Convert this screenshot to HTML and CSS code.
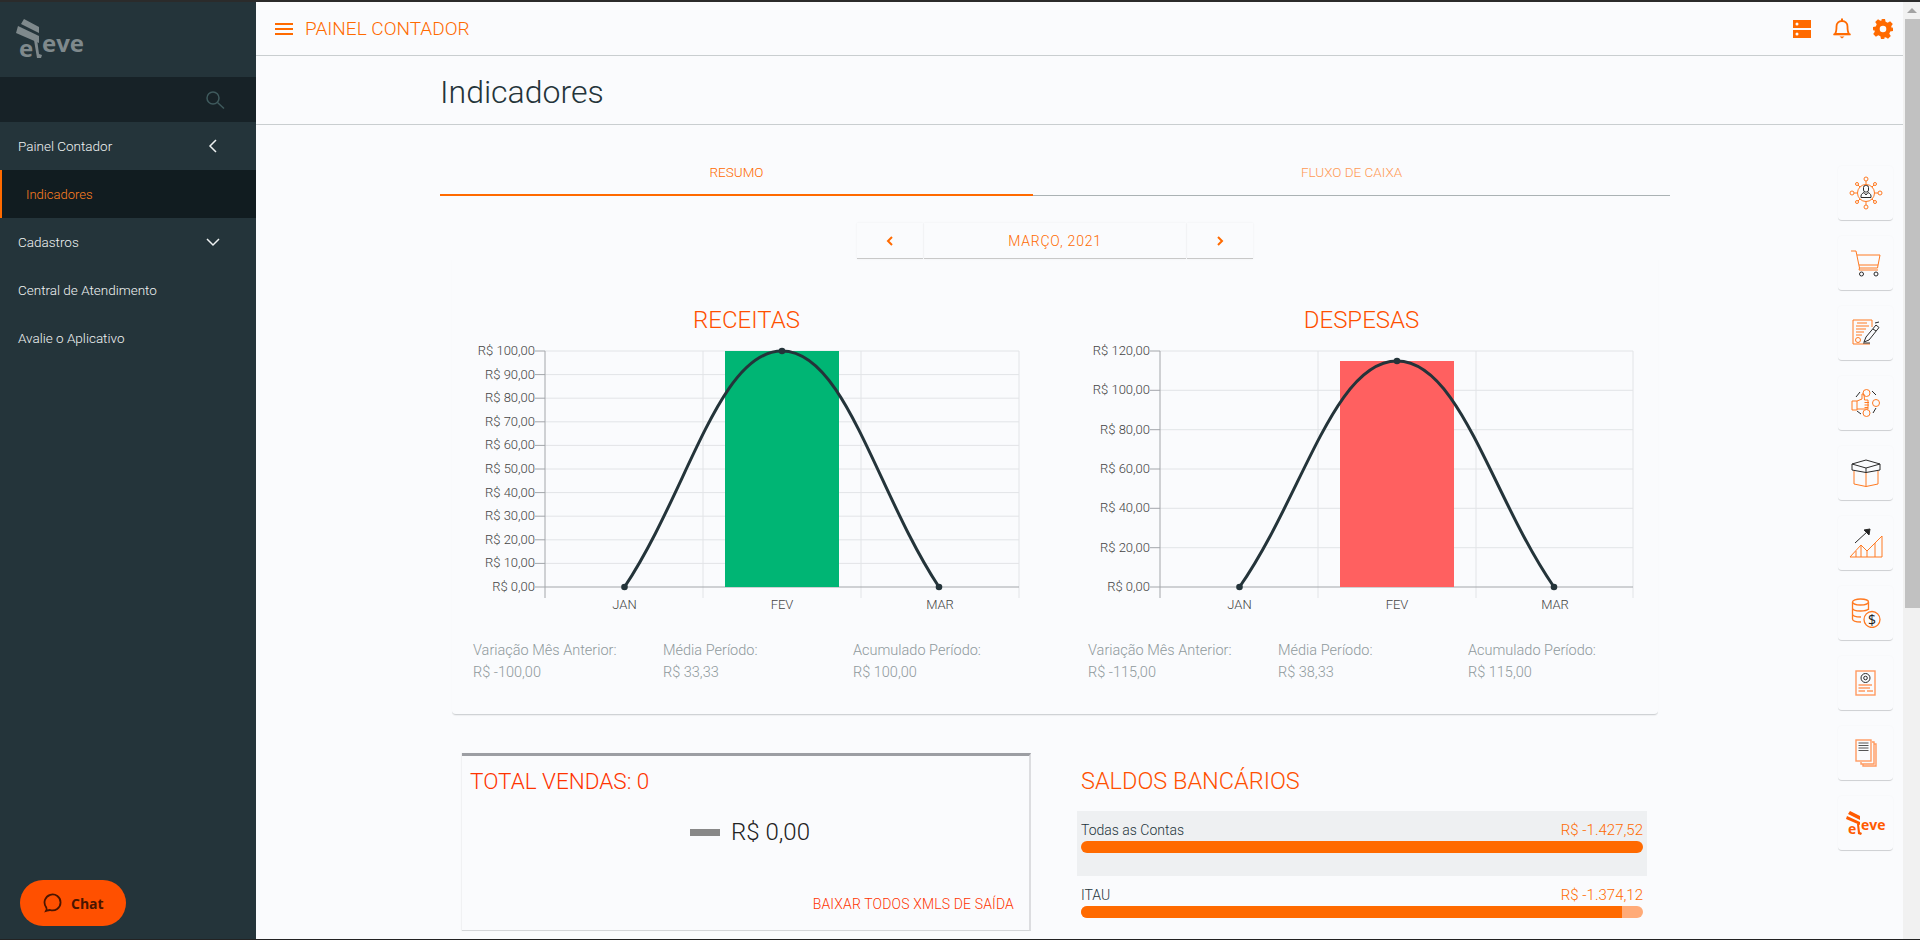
FILE: index.html
```html
<!DOCTYPE html>
<html lang="pt-BR">
<head>
<meta charset="utf-8">
<title>Indicadores</title>
<link rel="stylesheet" href="styles.css">
</head>
<body>
<div class="app">
  <aside class="sidebar">
    <div class="logo">
      <svg width="90" height="50" viewBox="0 0 90 50">
        <g class="logo-gray">
          <polygon points="24,1 39,9 39,15 21,6"/>
          <polygon points="18,8 39,18 39,25 16,15"/>
        </g>
        <text class="logo-text logo-gray" x="19" y="39">e</text>
        <text class="logo-text logo-gray" x="42" y="34">eve</text>
        <polygon class="logo-gray" points="34,22 37,21 39,36 42,37 41,40 37,40"/>
      </svg>
    </div>
    <div class="search">
      <svg width="20" height="20" viewBox="0 0 20 20"><circle class="search-ic" cx="8" cy="8" r="6"/><path class="search-ic" d="M12.5 12.5 L19 18.5"/></svg>
    </div>
    <nav class="menu">
      <div class="menu-item"><span>Painel Contador</span><svg class="chev" width="12" height="14" viewBox="0 0 12 14"><path class="chev-line" d="M8 1 L2 7 L8 13"/></svg></div>
      <div class="menu-item active"><span>Indicadores</span></div>
      <div class="menu-item"><span>Cadastros</span><svg class="chev" width="14" height="10" viewBox="0 0 14 10"><path class="chev-line" d="M1 2 L7 8 L13 2"/></svg></div>
      <div class="menu-item"><span>Central de Atendimento</span></div>
      <div class="menu-item"><span>Avalie o Aplicativo</span></div>
    </nav>
    <button class="chat">
      <svg width="20" height="20" viewBox="0 0 20 20"><path class="chat-ic" d="M4 18 C5 16 5 16 4 14 A8 8 0 1 1 8 17 C6.500 17 5.500 17.500 4 18 Z"/></svg>
      <span>Chat</span>
    </button>
  </aside>

  <main class="main">
    <header class="topbar">
      <div class="burger"><i></i><i></i><i></i></div>
      <div class="topbar-title">PAINEL CONTADOR</div>
      <div class="top-icons">
        <svg width="18" height="18" viewBox="0 0 18 18"><path class="fill-o" d="M0 0H18V8H0Z M4 2.500A1.500 1.500 0 1 0 4 5.500A1.500 1.500 0 1 0 4 2.500Z M0 10H18V18H0Z M4 12.500A1.500 1.500 0 1 0 4 15.500A1.500 1.500 0 1 0 4 12.500Z" fill-rule="evenodd"/></svg>
        <svg width="18" height="21" viewBox="0 0 18 21"><path class="line-bell" d="M2 16 C3.500 14 3.500 12 3.500 8.500 C3.500 5 6 3 9 3 C12 3 14.500 5 14.500 8.500 C14.500 12 14.500 14 16 16 Z"/><rect class="fill-o" x="0.500" y="15.500" width="17" height="1.800"/><rect class="fill-o" x="8" y="0.500" width="2" height="3"/><path class="fill-o" d="M6.500 18.500H11.500L9 20.500Z"/></svg>
        <svg width="20" height="20" viewBox="0 0 20 20"><path class="fill-o" fill-rule="evenodd" d="M8 0H12L12.600 2.800L14.700 3.700L17.100 2.200L19.800 5L18.200 7.300L19 9.400L20 8V12L17.200 12.600L16.300 14.700L17.800 17.100L15 19.800L12.700 18.200L10.600 19L12 20H8L7.400 17.200L5.300 16.300L2.900 17.800L0.200 15L1.800 12.700L1 10.600L0 12V8L2.800 7.400L3.700 5.300L2.200 2.900L5 0.200L7.300 1.800L9.400 1Z M10 6.700A3.300 3.300 0 1 0 10 13.300A3.300 3.300 0 1 0 10 6.700Z"/></svg>
      </div>
    </header>
    <div class="page-title"><h1>Indicadores</h1></div>

    <section class="content">
      <div class="tabs">
        <div class="tab tab-on">RESUMO</div>
        <div class="tab">FLUXO DE CAIXA</div>
      </div>
      <div class="pager">
        <div class="pg pg-btn"><svg width="8" height="10" viewBox="0 0 8 10"><path class="pg-ic" d="M6 1 L2 5 L6 9"/></svg></div>
        <div class="pg pg-mid">MARÇO, 2021</div>
        <div class="pg pg-btn"><svg width="8" height="10" viewBox="0 0 8 10"><path class="pg-ic" d="M2 1 L6 5 L2 9"/></svg></div>
      </div>

      <div class="panel">
        <div class="chart-col">
          <h2 class="chart-title">RECEITAS</h2>
          <svg class="chart" width="589" height="270" viewBox="0 0 589 270">
            <g class="grid">
              <path d="M93 10H567M93 33.600H567M93 57.200H567M93 80.800H567M93 104.400H567M93 128H567M93 151.600H567M93 175.200H567M93 198.800H567M93 222.400H567"/>
              <path d="M251 10V257M409 10V257M567 10V257"/>
            </g>
            <path class="axis" d="M83 10H93M83 33.600H93M83 57.200H93M83 80.800H93M83 104.400H93M83 128H93M83 151.600H93M83 175.200H93M83 198.800H93M83 222.400H93"/>
            <path class="axis" d="M93 10V257M83 246H567"/>
            <rect class="bar-green" x="273" y="10" width="114" height="236"/>
            <path class="curve" d="M172.500 246C235.500 151.600 267 10 330 10C393 10 424.500 151.600 487 246"/>
            <circle class="dot" cx="172.500" cy="246" r="3.300"/><circle class="dot" cx="330" cy="10" r="3.300"/><circle class="dot" cx="487" cy="246" r="3.300"/>
            <g class="tick ty">
              <text x="83" y="14">R$ 100,00</text><text x="83" y="38">R$ 90,00</text><text x="83" y="61">R$ 80,00</text><text x="83" y="85">R$ 70,00</text><text x="83" y="108">R$ 60,00</text><text x="83" y="132">R$ 50,00</text><text x="83" y="156">R$ 40,00</text><text x="83" y="179">R$ 30,00</text><text x="83" y="203">R$ 20,00</text><text x="83" y="226">R$ 10,00</text><text x="83" y="250">R$ 0,00</text>
            </g>
            <g class="tick tx"><text x="172.500" y="268">JAN</text><text x="330" y="268">FEV</text><text x="488" y="268">MAR</text></g>
          </svg>
          <div class="stats">
            <div><p>Variação Mês Anterior:</p><p>R$ -100,00</p></div>
            <div><p>Média Período:</p><p>R$ 33,33</p></div>
            <div><p>Acumulado Período:</p><p>R$ 100,00</p></div>
          </div>
        </div>
        <div class="chart-col">
          <h2 class="chart-title">DESPESAS</h2>
          <svg class="chart" width="589" height="270" viewBox="0 0 589 270">
            <g class="grid">
              <path d="M93 10H566M93 49.300H566M93 88.700H566M93 128H566M93 167.300H566M93 206.700H566"/>
              <path d="M251 10V257M409 10V257M566 10V257"/>
            </g>
            <path class="axis" d="M83 10H93M83 49.300H93M83 88.700H93M83 128H93M83 167.300H93M83 206.700H93"/>
            <path class="axis" d="M93 10V257M83 246H566"/>
            <rect class="bar-red" x="273" y="20" width="114" height="226"/>
            <path class="curve" d="M172.500 246C235.500 155.600 267 20 330 20C393 20 424.500 155.600 487 246"/>
            <circle class="dot" cx="172.500" cy="246" r="3.300"/><circle class="dot" cx="330" cy="20" r="3.300"/><circle class="dot" cx="487" cy="246" r="3.300"/>
            <g class="tick ty">
              <text x="83" y="14">R$ 120,00</text><text x="83" y="53">R$ 100,00</text><text x="83" y="93">R$ 80,00</text><text x="83" y="132">R$ 60,00</text><text x="83" y="171">R$ 40,00</text><text x="83" y="211">R$ 20,00</text><text x="83" y="250">R$ 0,00</text>
            </g>
            <g class="tick tx"><text x="172.500" y="268">JAN</text><text x="330" y="268">FEV</text><text x="488" y="268">MAR</text></g>
          </svg>
          <div class="stats">
            <div><p>Variação Mês Anterior:</p><p>R$ -115,00</p></div>
            <div><p>Média Período:</p><p>R$ 38,33</p></div>
            <div><p>Acumulado Período:</p><p>R$ 115,00</p></div>
          </div>
        </div>
      </div>

      <div class="lower">
        <div class="sales">
          <h3 class="sales-title">TOTAL VENDAS: 0</h3>
          <div class="sales-value"><i></i><span>R$ 0,00</span></div>
          <div class="sales-link">BAIXAR TODOS XMLS DE SAÍDA</div>
        </div>
        <div class="banks">
          <h3 class="banks-title">SALDOS BANCÁRIOS</h3>
          <div class="bank bank-all">
            <div class="bank-row"><span>Todas as Contas</span><b>R$ -1.427,52</b></div>
            <div class="track"><div class="fill fill-all"></div></div>
          </div>
          <div class="bank">
            <div class="bank-row"><span>ITAU</span><b>R$ -1.374,12</b></div>
            <div class="track"><div class="fill fill-itau"></div></div>
          </div>
        </div>
      </div>
    </section>

    <div class="shortcuts">
      <div class="sc"><svg width="34" height="34" viewBox="0 0 34 34">
        <g class="ico-o"><circle cx="17" cy="17" r="8.500"/><circle cx="17" cy="3" r="2"/><circle cx="17" cy="31" r="2"/><circle cx="3" cy="17" r="2"/><circle cx="31" cy="17" r="2"/><circle cx="8" cy="8" r="1.500"/><circle cx="26" cy="8" r="1.500"/><circle cx="8" cy="26" r="1.500"/><circle cx="26" cy="26" r="1.500"/><path d="M17 5V8.500M17 25.500V29M5 17H8.500M25.500 17H29M9 9L11 11M25 9L23 11M9 25L11 23M25 25L23 23"/></g>
        <g class="ico-d"><rect x="14.500" y="9.500" width="5" height="6.500" rx="2"/><path d="M12 21.500V20C12 18 14 17 15 16.500L17 19L19 16.500C20 17 22 18 22 20V21.500Z"/></g>
      </svg></div>
      <div class="sc"><svg width="32" height="28" viewBox="0 0 32 28">
        <g class="ico-o"><path d="M1 2H6L9.500 19H27.500L30 6H7"/><path d="M9 16H28M9.500 19L9 21H28"/></g>
        <g class="ico-d"><circle cx="11.500" cy="25" r="2"/><circle cx="26" cy="25" r="2"/></g>
      </svg></div>
      <div class="sc"><svg width="30" height="28" viewBox="0 0 30 28">
        <g class="ico-o"><path d="M21 8V1H2V25H19"/><path d="M6 4H16M5 7H18M5 10H15M5 13H13M5 16H11"/><circle cx="7" cy="21" r="2.500"/></g>
        <g class="ico-d"><path d="M13 23L15 18L25 6L28 8.500L18 21Z"/><path d="M12 24H19M22 10L25 12M24 4L28 3"/></g>
      </svg></div>
      <div class="sc"><svg width="30" height="32" viewBox="0 0 30 32">
        <g class="ico-o"><circle cx="15.500" cy="6" r="3.500"/><circle cx="25" cy="16" r="3.500"/><circle cx="15.500" cy="26" r="3.500"/><path d="M1 14H6V23H1Z M6 14L11 12L11 7H13L13.500 13H17V22H6"/><path d="M13.500 15.500H18M13.500 18H18M13.500 20.500H17"/></g>
        <g class="ico-d"><path d="M5 10L9 5M21 4L25 8M25 21L22 26M10 27L6 24"/></g>
      </svg></div>
      <div class="sc"><svg width="30" height="29" viewBox="0 0 30 29">
        <g class="ico-o"><path d="M3 12V25L15 27.500L27 25V12M15 13V27.500"/></g>
        <g class="ico-d"><path d="M1 5L15 1L29 5V11L15 13.500L1 11Z M1 5L15 9L29 5 M15 9V13.500"/></g>
      </svg></div>
      <div class="sc"><svg width="34" height="30" viewBox="0 0 34 30">
        <g class="ico-o"><path d="M1 29L12 17L18 23L33 8V29Z"/><path d="M7 23V29M12 17V29M18 23V29M26 15V29"/></g>
        <g class="ico-d"><path d="M6 15L19 3"/><path class="fill-d" d="M15 2L21 1L20 7Z"/></g>
      </svg></div>
      <div class="sc"><svg width="30" height="30" viewBox="0 0 30 30">
        <g class="ico-o ico-bold"><ellipse cx="9.500" cy="4" rx="8" ry="3"/><path d="M1.500 4V21C1.500 23 5 24 10 24M17.500 4V12M1.500 10C1.500 12 5 13 9.500 13C13 13 16 12.500 17.500 11M1.500 16C1.500 18 5 19 10 19"/><circle cx="21" cy="21.500" r="8"/></g>
        <text class="ico-dollar" x="21" y="26.500">$</text>
      </svg></div>
      <div class="sc"><svg width="22" height="26" viewBox="0 0 22 26">
        <g class="ico-o2"><rect x="1" y="1" width="19" height="24"/><path d="M3.500 15H17M3.500 18H15M3.500 21H10M12 21H18"/></g>
        <g class="ico-d"><circle cx="10.500" cy="8" r="4.500"/><circle cx="10.500" cy="8" r="1.800"/></g>
      </svg></div>
      <div class="sc"><svg width="22" height="28" viewBox="0 0 22 28">
        <g class="ico-o2"><path d="M17 3H19V25H6V23M19 5H21V27H8V25"/><rect x="1" y="1" width="15" height="21"/></g>
        <path class="ico-g" d="M3.500 4H13.500M3.500 6.500H13.500M3.500 9H13.500M3.500 11.500H13.500"/>
      </svg></div>
      <div class="sc"><svg width="42" height="36" viewBox="0 -5 42 36">
        <g class="fill-eleve">
          <polygon points="5,1 15,6 15,10 3,4"/>
          <polygon points="2,6 15,12 15,15 1,9"/>
        </g>
        <text class="eleve-o" x="3" y="24">e</text>
        <text class="eleve-o" x="16" y="20">eve</text>
        <polygon class="fill-eleve" points="12,14 14,14 15,22 17,23 16,25 13,24"/>
      </svg></div>
    </div>
  </main>

  <div class="scrollbar">
    <div class="sb-up"></div>
    <div class="sb-thumb"></div>
  </div>
</div>
</body>
</html>
```

FILE: styles.css
```css
* { box-sizing: border-box; }
html, body { margin: 0; padding: 0; height: 100%; overflow: hidden; }
body {
  font-family: Roboto, "Open Sans", sans-serif;
  font-weight: 300;
  background: #fafbfd;
  color: #24343a;
}
h1, h2, h3, p { margin: 0; font-weight: 300; }

.app {
  display: flex;
  height: 940px;
  border-top: 2px solid #2b2b2b;
  border-bottom: 1px solid #222;
  overflow: hidden;
}

/* Sidebar */
.sidebar {
  width: 256px;
  flex: none;
  background: #24343a;
  position: relative;
}
.logo { height: 75px; padding-top: 16px; }
.logo svg { display: block; }
.logo-gray { fill: #7f898c; }
.logo-text { font: 700 24px "Open Sans", sans-serif; }
.search {
  height: 45px;
  background: #172227;
  display: flex;
  align-items: center;
  justify-content: flex-end;
  padding-right: 31px;
}
.search-ic { fill: none; stroke: #3f5a5d; stroke-width: 1.500; }
.menu-item {
  height: 48px;
  padding: 0 36px 0 18px;
  display: flex;
  align-items: center;
  justify-content: space-between;
  color: #f0f3f3;
  font-size: 13.500px;
}
.menu-item.active {
  background: #111c20;
  border-left: 2px solid #ff6a00;
  padding-left: 24px;
  color: #ff8020;
  font-size: 13px;
}
.chev-line { fill: none; stroke: #eef1f1; stroke-width: 1.500; }
.chat {
  position: absolute;
  left: 20px;
  top: 878px;
  width: 106px;
  height: 46px;
  border: 0;
  border-radius: 23px;
  background: #ff5000;
  color: #4a1500;
  display: flex;
  align-items: center;
  gap: 9px;
  padding: 0 0 0 22px;
  font: 700 14px "Open Sans", sans-serif;
}
.chat-ic { fill: none; stroke: #4a1500; stroke-width: 1.800; }

/* Main */
.main { flex: 1; min-width: 0; position: relative; }
.topbar {
  height: 54px;
  border-bottom: 1px solid #c9ced0;
  display: flex;
  align-items: center;
  padding-left: 19px;
}
.burger { width: 18px; display: flex; flex-direction: column; gap: 3px; }
.burger i { height: 2px; background: #ff6a00; }
.topbar-title { margin-left: 12px; font-size: 19px; color: #ff6a00; }
.top-icons {
  margin-left: auto;
  margin-right: 10px;
  display: flex;
  align-items: center;
  gap: 22px;
}
.fill-o { fill: #ff6a00; }
.line-bell { fill: none; stroke: #ff6a00; stroke-width: 1.800; }
.page-title {
  height: 69px;
  border-bottom: 1px solid #c9ced0;
  padding: 3px 0 0 184px;
  display: flex;
  align-items: center;
}
.page-title h1 { font-size: 32px; color: #24343a; }

.content { margin-left: 184px; width: 1230px; }
.tabs { display: flex; height: 71px; }
.tab {
  width: 637px;
  border-bottom: 1px solid #aab2b4;
  display: flex;
  align-items: center;
  justify-content: center;
  padding-top: 24px;
  font-size: 13.500px;
  color: #ff9a55;
}
.tab:first-child { width: 593px; }
.tab-on { border-bottom: 2px solid #ff6a00; color: #ff6a00; }
.pager { display: flex; justify-content: center; margin-top: 27px; gap: 1px; }
.pg {
  height: 36px;
  border-bottom: 1px solid #c8c8c8;
  box-shadow: 0 0 2px rgba(0, 0, 0, .06);
  display: flex;
  align-items: center;
  justify-content: center;
  color: #ff6a00;
  font-size: 14px;
}
.pg-btn { width: 66px; }
.pg-mid { width: 262px; letter-spacing: .8px; }
.pg-ic { fill: none; stroke: #ff6a00; stroke-width: 2; }

.panel {
  margin-left: 12px;
  width: 1206px;
  display: grid;
  grid-template-columns: 615px 591px;
  padding-top: 42px;
  height: 456px;
  border-bottom: 1px solid #cfd2d5;
  border-radius: 0 0 4px 4px;
  box-shadow: 0 1px 1px rgba(0, 0, 0, .05);
}
.chart-title {
  width: 589px;
  height: 38px;
  line-height: 38px;
  text-align: center;
  font-size: 24px;
  color: #ff5000;
}
.chart { display: block; margin-top: 2px; }
.grid path { fill: none; stroke: #e2e4e7; stroke-width: 1; }
.axis { fill: none; stroke: #a3a6aa; stroke-width: 1; }
.bar-green { fill: #00b574; }
.bar-red { fill: #ff6060; }
.curve { fill: none; stroke: #24343a; stroke-width: 3; }
.dot { fill: #24343a; }
.tick text { font: 300 13px Roboto, sans-serif; fill: #444; }
.ty { text-anchor: end; }
.tx { text-anchor: middle; }

.stats {
  display: grid;
  grid-template-columns: repeat(3, 190px);
  padding-left: 21px;
  margin-top: 29px;
  font-size: 14.500px;
  color: #8f999c;
}
.stats p { line-height: 22px; white-space: nowrap; }

.lower {
  display: grid;
  grid-template-columns: 569px 570px;
  gap: 46px;
  margin: 38px 0 0 22px;
}
.sales {
  height: 178px;
  border-top: 3px solid #9c9ea3;
  border-right: 2px solid #dcdde0;
  border-bottom: 1px solid #d4d6d9;
  box-shadow: -1px 0 1px rgba(0, 0, 0, .04);
  padding: 7px 15px 0 8px;
}
.sales-title { font-size: 22.500px; line-height: 36px; color: #ff3300; }
.sales-value {
  margin-top: 15px;
  height: 36px;
  display: flex;
  align-items: center;
  justify-content: center;
  gap: 11px;
  padding-left: 16px;
  font-size: 24px;
  color: #222;
}
.sales-value i { width: 30px; height: 7px; background: #888; }
.sales-link { margin-top: 44px; line-height: 20px; text-align: right; font-size: 14px; letter-spacing: .15px; color: #ff3300; }

.banks-title { padding: 10px 0 0 4px; font-size: 23.500px; line-height: 36px; height: 46px; color: #ff5000; margin-bottom: 12px; }
.bank { height: 65px; padding: 9px 4px 0; }
.bank-all { background: #eef0f2; }
.bank-row { display: flex; justify-content: space-between; line-height: 20px; font-size: 14px; color: #24343a; }
.bank-row b { font-weight: 300; font-size: 15px; color: #ff6a00; }
.track { margin-top: 1px; height: 12px; border-radius: 6px; background: #ffab78; overflow: hidden; }
.fill { height: 100%; background: #ff6a00; }
.fill-all { width: 100%; }
.fill-itau { width: 96.300%; }

/* Right shortcut column */
.shortcuts {
  position: absolute;
  left: 1582px;
  top: 164px;
  display: flex;
  flex-direction: column;
  gap: 15px;
}
.sc {
  width: 55px;
  height: 55px;
  border-radius: 4px;
  border-bottom: 1px solid #d0d2d5;
  box-shadow: 0 0 2px rgba(0, 0, 0, .04);
  display: flex;
  align-items: center;
  justify-content: center;
}
.ico-o { fill: none; stroke: #ff7a22; stroke-width: 1; }
.ico-bold { stroke-width: 1.300; }
.ico-o2 { fill: none; stroke: #ff9a60; stroke-width: 1.400; }
.ico-d { fill: none; stroke: #2a2a2a; stroke-width: 1; }
.ico-g { fill: none; stroke: #555; stroke-width: 1.200; }
.fill-d { fill: #222; }
.ico-dollar { font: 400 14px "Open Sans", sans-serif; text-anchor: middle; fill: #222; }
.fill-eleve { fill: #ff5a00; }
.eleve-o { font: 700 14px "Open Sans", sans-serif; fill: #ff5a00; }

/* Painted scrollbar */
.scrollbar { width: 17px; flex: none; background: #f1f1f1; position: relative; }
.sb-up {
  height: 17px;
  position: relative;
}
.sb-up::before {
  content: "";
  position: absolute;
  left: 4px;
  top: 6px;
  border-left: 5px solid transparent;
  border-right: 5px solid transparent;
  border-bottom: 5px solid #a3a3a3;
}
.sb-thumb { margin-left: 2px; height: 589px; background: #c1c1c1; }
```
